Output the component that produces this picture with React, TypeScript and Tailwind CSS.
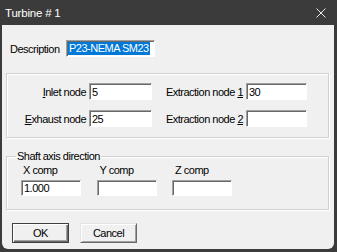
import React from "react";

const ui = "font-[family-name:'Liberation_Sans',Arial,sans-serif] text-[11px] leading-[14px] tracking-[-0.5px] text-black whitespace-nowrap";

function Field({ value, w, h = 17, className = "" }: { value?: string; w: number; h?: number; className?: string }) {
  return (
    <div
      className={`flex items-center bg-white border-t border-l border-t-[#a0a0a0] border-l-[#a0a0a0] border-b border-r border-b-[#ffffff] border-r-[#ffffff] shadow-[inset_1px_1px_0_#696969] pl-[2px] ${className}`}
      style={{ width: w, height: h }}
    >
      {value}
    </div>
  );
}

export default function App() {
  return (
    <div className={`w-[337px] h-[252px] bg-[#3b3b3b] flex flex-col overflow-hidden ${ui}`}>
      <div className="h-[25px] flex items-center justify-between pl-[5px] pr-[11px] shrink-0">
        <span className="text-[11.5px] tracking-[-0.2px] text-white">Turbine # 1</span>
        <svg width="10" height="10" viewBox="0 0 10 10">
          <path d="M0.5 0.5 L9.5 9.5 M9.5 0.5 L0.5 9.5" stroke="#e8e8e8" strokeWidth="1" />
        </svg>
      </div>
      <div className="flex-1 ml-[2px] mr-[3px] mb-[3px] bg-[#f0f0f0] rounded-b-[6px] flex flex-col pl-[4px] pr-[5px]">
        <div className="flex items-center mt-[15px] h-[17px] pl-[4px]">
          <span className="w-[56px]">Description</span>
          <div className="flex items-center bg-white w-[89px] h-[17px] border-t border-l border-t-[#a0a0a0] border-l-[#a0a0a0] border-b border-r border-b-white border-r-white shadow-[inset_1px_1px_0_#696969] pl-[1px]">
            <span className="bg-[#0078d7] text-white h-[13px] leading-[13px] px-[1px]">P23-NEMA SM23</span>
          </div>
        </div>

        <div className="mt-[16px] h-[65px] border border-[#d0d0d0] shadow-[inset_1px_1px_0_#ffffff,1px_1px_0_#ffffff] flex flex-col pt-[9px] gap-[10px]">
          <div className="flex items-center h-[17px]">
            <span className="w-[79px] text-right"><span className="underline">I</span>nlet node</span>
            <Field value="5" w={63} className="ml-[3px]" />
            <span className="w-[80px] ml-[11px] text-right">Extraction node <span className="underline">1</span></span>
            <Field value="30" w={61} className="ml-[3px]" />
          </div>
          <div className="flex items-center h-[17px]">
            <span className="w-[79px] text-right"><span className="underline">E</span>xhaust node</span>
            <Field value="25" w={63} className="ml-[3px]" />
            <span className="w-[80px] ml-[11px] text-right">Extraction node <span className="underline">2</span></span>
            <Field w={61} className="ml-[3px]" />
          </div>
        </div>

        <fieldset className="mt-[11px] border border-[#d0d0d0] shadow-[inset_1px_1px_0_#ffffff,1px_1px_0_#ffffff] pl-[14px] pb-[13px]">
          <legend className="ml-[-5px] px-[1px] h-[14px]">Shaft axis direction</legend>
          <div className="grid grid-cols-[60px_60px_60px] gap-x-[15.5px]">
            <span className="pl-[2px] h-[14px]">X comp</span>
            <span className="pl-[3px] h-[14px]">Y comp</span>
            <span className="pl-[3px] h-[14px]">Z comp</span>
            <Field value="1.000" w={60} h={16} className="mt-[3px]" />
            <Field w={60} h={16} className="mt-[3px]" />
            <Field w={60} h={16} className="mt-[3px]" />
          </div>
        </fieldset>

        <div className="flex mt-[13px] pl-[6px] gap-[11px]">
          <button className="w-[57px] h-[20px] border border-[#404040] bg-[#f0f0f0] shadow-[inset_1px_1px_0_#ffffff,inset_-1px_-1px_0_#696969,inset_-2px_-2px_0_#a0a0a0] flex items-center justify-center">
            OK
          </button>
          <button className="w-[57px] h-[20px] border-t border-l border-t-[#e3e3e3] border-l-[#e3e3e3] border-b border-r border-b-[#696969] border-r-[#696969] bg-[#f0f0f0] shadow-[inset_1px_1px_0_#ffffff,inset_-1px_-1px_0_#a0a0a0] flex items-center justify-center">
            Cancel
          </button>
        </div>
      </div>
    </div>
  );
}
